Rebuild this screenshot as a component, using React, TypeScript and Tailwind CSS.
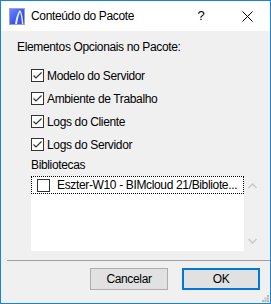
import React from "react"

const font = { fontFamily: '"Liberation Sans", Arial, sans-serif' }

function CheckBox({ checked }: { checked: boolean }) {
  return (
    <span className="w-[13px] h-[13px] border border-[#333333] bg-white flex items-center justify-center shrink-0">
      {checked && (
        <svg width="11" height="11" viewBox="0 0 11 11">
          <path d="M1.5 5.5 L4 8 L9.5 2.5" fill="none" stroke="#333333" strokeWidth="1.2" />
        </svg>
      )}
    </span>
  )
}

function AppIcon() {
  return (
    <svg width="16" height="17" viewBox="0 0 16 17">
      <defs>
        <linearGradient id="g" x1="0" y1="0" x2="1" y2="1">
          <stop offset="0" stopColor="#6a8cff" />
          <stop offset="1" stopColor="#1a2fe0" />
        </linearGradient>
      </defs>
      <rect x="0.5" y="0.5" width="15" height="16" fill="url(#g)" stroke="#9aa4c8" />
      <path d="M6 16 C7 9 9 4 11 2 C13 5 14 10 14.5 16 Z" fill="#ffffff" opacity="0.9" />
      <path d="M8 16 C9 10 10 6 11 4 C12 7 12.5 11 13 16 Z" fill="#3a55f0" />
    </svg>
  )
}

const options = ["Modelo do Servidor", "Ambiente de Trabalho", "Logs do Cliente", "Logs do Servidor"]

export default function App() {
  return (
    <div className="w-[271px] h-[304px] border border-[#1883d7] bg-[#f0f0f0] flex flex-col text-[12px] tracking-[-0.35px] text-black" style={font}>
      {/* Title bar */}
      <div className="h-[30px] bg-white flex items-center pl-[8px] shrink-0">
        <AppIcon />
        <span className="ml-[6px] text-[12px]">Conteúdo do Pacote</span>
        <span className="ml-auto w-[46px] text-center text-[13px]">?</span>
        <span className="w-[46px] flex justify-center">
          <svg width="11" height="11" viewBox="0 0 11 11">
            <path d="M0.5 0.5 L10.5 10.5 M10.5 0.5 L0.5 10.5" stroke="#000" strokeWidth="1" />
          </svg>
        </span>
      </div>

      {/* Body */}
      <div className="flex-1 pl-[16px] pt-[8px] flex flex-col">
        <div className="leading-[16px]">Elementos Opcionais no Pacote:</div>
        <div className="ml-[14px] mt-[9px] flex flex-col">
          {options.map((o) => (
            <div key={o} className="h-[23px] flex items-center gap-[3px]">
              <CheckBox checked />
              <span>{o}</span>
            </div>
          ))}
          <div className="leading-[16px] mt-[1px]">Bibliotecas</div>
          <div className="mt-[3px] flex">
            <div className="w-[213px] h-[75px] bg-white">
              <div className="h-[18px] border border-dotted border-black flex items-center pl-[5px]">
                <CheckBox checked={false} />
                <span className="ml-[7px] whitespace-nowrap">Eszter-W10 - BIMcloud 21/Bibliote...</span>
              </div>
            </div>
            <div className="w-[17px] h-[75px] flex flex-col items-center justify-between py-[7px]">
              <svg width="9" height="6" viewBox="0 0 9 6">
                <path d="M0.5 5 L4.5 1 L8.5 5" fill="none" stroke="#c8c8c8" strokeWidth="1.5" />
              </svg>
              <svg width="9" height="6" viewBox="0 0 9 6">
                <path d="M0.5 1 L4.5 5 L8.5 1" fill="none" stroke="#c8c8c8" strokeWidth="1.5" />
              </svg>
            </div>
          </div>
        </div>
      </div>

      {/* Footer */}
      <div className="ml-[6px] h-px bg-[#a0a0a0] shrink-0" />
      <div className="h-[42px] flex justify-end items-start pt-[7px] pr-[10px] gap-[14px] relative shrink-0">
        <button className="w-[78px] h-[22px] bg-[#e1e1e1] border border-[#adadad] text-[12px] tracking-[-0.35px]" style={font}>Cancelar</button>
        <button className="w-[78px] h-[22px] bg-[#e1e1e1] border-2 border-[#0078d7] text-[12px]" style={font}>OK</button>
        <svg className="absolute right-[1px] bottom-[1px]" width="7" height="7" viewBox="0 0 7 7">
          <rect x="5" y="0" width="2" height="2" fill="#b8b8b8" />
          <rect x="2.5" y="2.5" width="2" height="2" fill="#b8b8b8" />
          <rect x="5" y="2.5" width="2" height="2" fill="#b8b8b8" />
          <rect x="0" y="5" width="2" height="2" fill="#b8b8b8" />
          <rect x="2.5" y="5" width="2" height="2" fill="#b8b8b8" />
          <rect x="5" y="5" width="2" height="2" fill="#b8b8b8" />
        </svg>
      </div>
    </div>
  )
}
